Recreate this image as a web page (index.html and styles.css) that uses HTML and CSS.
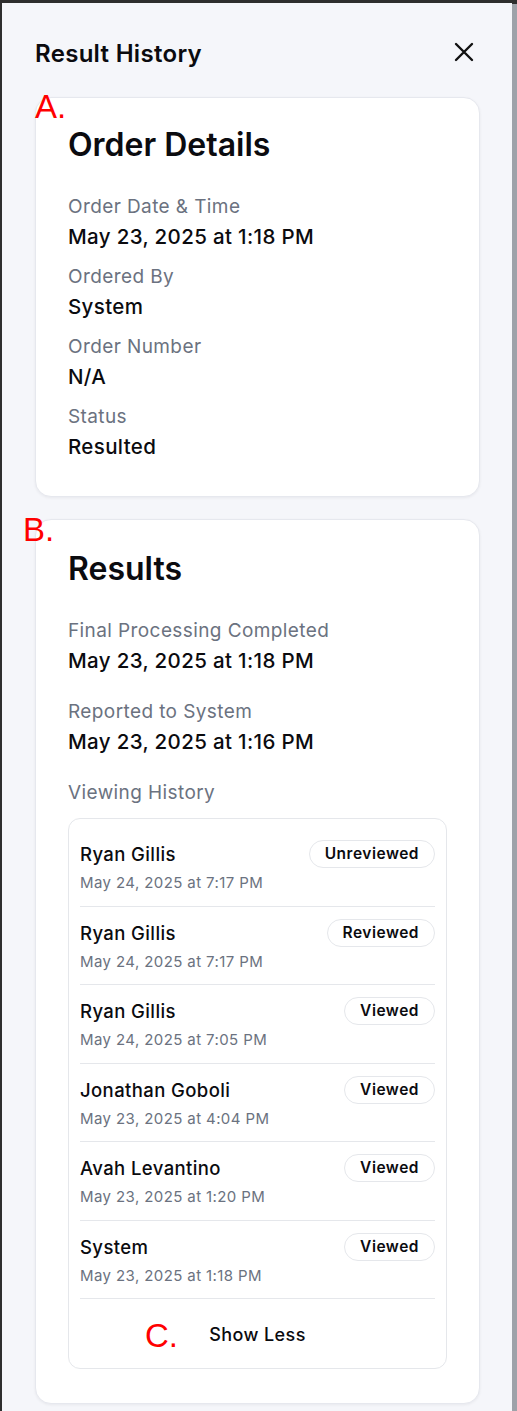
FILE: index.html
```html
<!DOCTYPE html>
<html lang="en">
<head>
<meta charset="utf-8">
<title>Result History</title>
<link rel="stylesheet" href="styles.css">
</head>
<body>
<div class="frame">
  <div class="panel">
    <header class="panel-header">
      <h1 class="panel-title">Result History</h1>
      <button class="close-btn" aria-label="Close">
        <svg width="20" height="20" viewBox="0 0 20 20"><path d="M2 2 L18 18 M18 2 L2 18" stroke="#111" stroke-width="2.4" stroke-linecap="round" fill="none"/></svg>
      </button>
    </header>

    <section class="card card-a">
      <h2 class="card-title">Order Details</h2>
      <div class="field">
        <div class="label">Order Date &amp; Time</div>
        <div class="value">May 23, 2025 at 1:18 PM</div>
      </div>
      <div class="field">
        <div class="label">Ordered By</div>
        <div class="value">System</div>
      </div>
      <div class="field">
        <div class="label">Order Number</div>
        <div class="value">N/A</div>
      </div>
      <div class="field">
        <div class="label">Status</div>
        <div class="value">Resulted</div>
      </div>
    </section>

    <section class="card card-b">
      <h2 class="card-title">Results</h2>
      <div class="field">
        <div class="label">Final Processing Completed</div>
        <div class="value">May 23, 2025 at 1:18 PM</div>
      </div>
      <div class="field">
        <div class="label">Reported to System</div>
        <div class="value">May 23, 2025 at 1:16 PM</div>
      </div>
      <div class="field">
        <div class="label">Viewing History</div>
        <div class="history">
          <div class="row">
            <div class="row-top"><span class="name">Ryan Gillis</span><span class="badge">Unreviewed</span></div>
            <div class="date">May 24, 2025 at 7:17 PM</div>
          </div>
          <div class="row">
            <div class="row-top"><span class="name">Ryan Gillis</span><span class="badge">Reviewed</span></div>
            <div class="date">May 24, 2025 at 7:17 PM</div>
          </div>
          <div class="row">
            <div class="row-top"><span class="name">Ryan Gillis</span><span class="badge">Viewed</span></div>
            <div class="date">May 24, 2025 at 7:05 PM</div>
          </div>
          <div class="row">
            <div class="row-top"><span class="name">Jonathan Goboli</span><span class="badge">Viewed</span></div>
            <div class="date">May 23, 2025 at 4:04 PM</div>
          </div>
          <div class="row">
            <div class="row-top"><span class="name">Avah Levantino</span><span class="badge">Viewed</span></div>
            <div class="date">May 23, 2025 at 1:20 PM</div>
          </div>
          <div class="row">
            <div class="row-top"><span class="name">System</span><span class="badge">Viewed</span></div>
            <div class="date">May 23, 2025 at 1:18 PM</div>
          </div>
          <button class="show-less">Show Less</button>
        </div>
      </div>
    </section>
  </div>
  <div class="scrollbar"></div>

  <span class="mark mark-a">A.</span>
  <span class="mark mark-b">B.</span>
  <span class="mark mark-c">C.</span>
</div>
</body>
</html>
```

FILE: styles.css
```css
* { box-sizing: border-box; }
html, body { margin: 0; padding: 0; }
body {
  background: #2e2e2e;
  font-family: "Inter", "Noto Sans", sans-serif;
  color: #0b0b0f;
}
.frame {
  position: relative;
  display: flex;
  padding-top: 3px;
  padding-left: 2px;
  min-height: 1411px;
}
.panel {
  width: 510px;
  background: #f5f6fa;
  padding: 36px 32px 20px 33px;
}
.scrollbar {
  width: 5px;
  background: #9ea2a9;
  margin-top: 1px;
}
.panel-header {
  display: flex;
  align-items: center;
  justify-content: space-between;
  height: 30px;
  margin-bottom: 28px;
}
.panel-title {
  margin: 0;
  font-size: 24px;
  font-weight: 600;
  line-height: 30px;
  letter-spacing: 0.3px;
}
.close-btn {
  border: 0;
  background: none;
  padding: 0;
  margin-right: 6px;
  width: 20px;
  height: 20px;
  display: flex;
  margin-top: -4px;
}
.card {
  background: #fff;
  border: 1px solid #e6e8ee;
  border-radius: 16px;
  box-shadow: 0 1px 3px rgba(16, 24, 40, 0.06);
  padding: 27px 32px 35px;
}
.card-b { margin-top: 22px; padding-top: 29px; padding-bottom: 34px; }
.card-title {
  margin: 0 0 29px;
  font-size: 32px;
  font-weight: 600;
  line-height: 40px;
  letter-spacing: 0;
}
.card-b .card-title { margin-bottom: 29px; }
.field + .field { margin-top: 13px; }
.card-b .field + .field { margin-top: 24px; }
.label {
  font-size: 19px;
  line-height: 26px;
  letter-spacing: 0.4px;
  color: #6b7280;
}
.value {
  margin-top: 3px;
  font-size: 20.5px;
  line-height: 28px;
  font-weight: 500;
  letter-spacing: 0.35px;
}
.history {
  margin-top: 12px;
  border: 1px solid #e5e7eb;
  border-radius: 12px;
  padding: 9px 11px 0;
}
.row {
  padding: 12px 0 11px;
  border-bottom: 1px solid #e5e7eb;
}
.row-top {
  display: flex;
  align-items: center;
  justify-content: space-between;
  height: 28px;
}
.name {
  font-size: 18.5px;
  font-weight: 500;
  letter-spacing: 0.4px;
}
.badge {
  height: 28px;
  line-height: 26px;
  padding: 0 15px;
  border: 1px solid #e5e7eb;
  border-radius: 14px;
  font-size: 15.5px;
  font-weight: 600;
  letter-spacing: 0.5px;
}
.date {
  margin-top: 4px;
  font-size: 15px;
  line-height: 22.5px;
  letter-spacing: 0.4px;
  color: #6b7280;
}
.show-less {
  display: block;
  width: 100%;
  border: 0;
  background: none;
  font-family: inherit;
  color: #0b0b0f;
  font-size: 18px;
  font-weight: 500;
  letter-spacing: 0.4px;
  line-height: 24px;
  padding: 24px 0 21px;
}
.mark {
  position: absolute;
  color: #ff0000;
  font-family: "Liberation Sans", "DejaVu Sans", sans-serif;
  font-size: 33px;
  line-height: 1;
}
.mark-a { left: 35px; top: 90px; }
.mark-b { left: 23px; top: 513px; }
.mark-c { left: 145px; top: 1319px; }
```
